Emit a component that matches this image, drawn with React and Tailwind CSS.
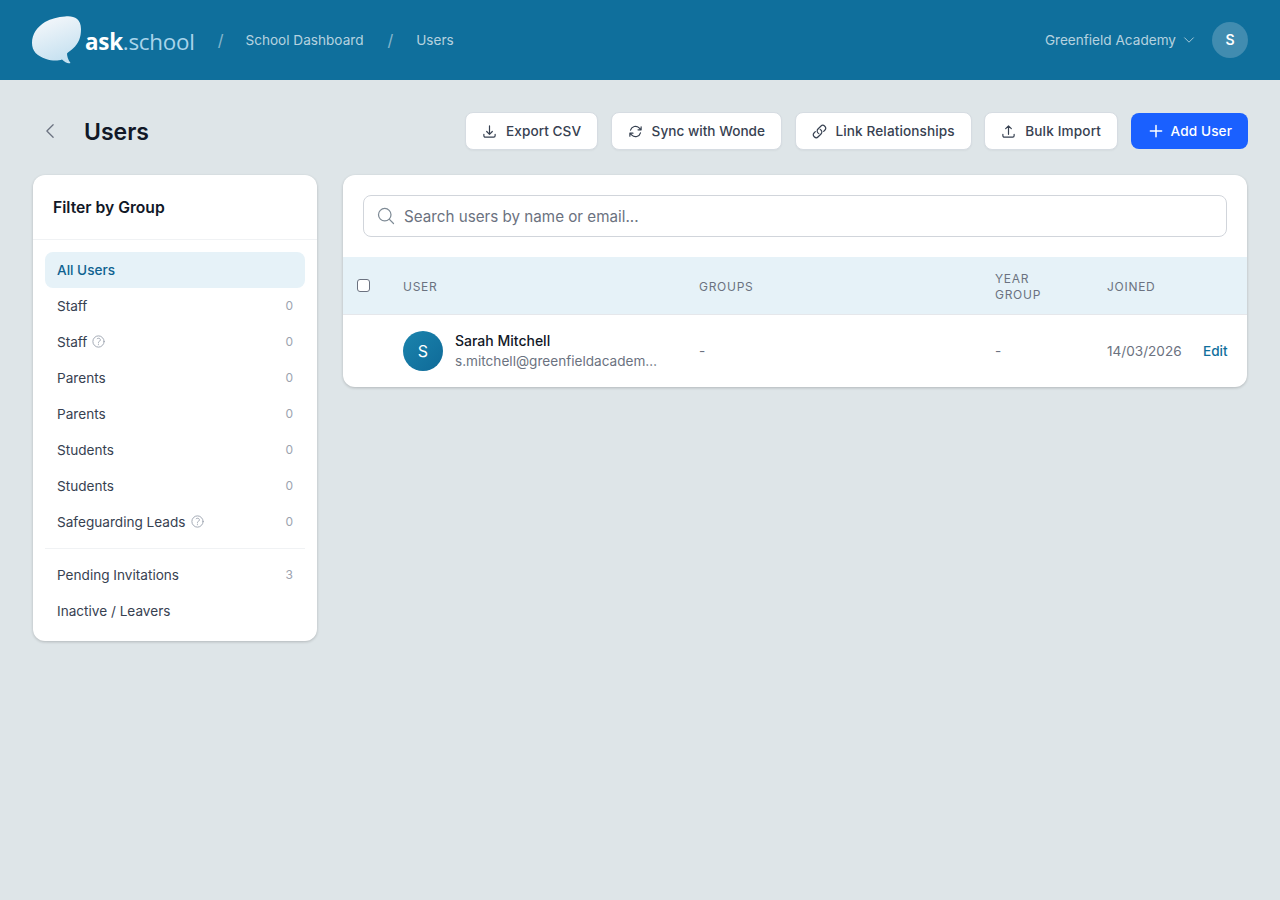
import React from "react";
import {
  HiOutlineChevronLeft,
  HiOutlineChevronDown,
  HiOutlineArrowDownTray,
  HiOutlineArrowUpTray,
  HiOutlineArrowPath,
  HiOutlineLink,
  HiOutlinePlus,
  HiOutlineMagnifyingGlass,
  HiOutlineQuestionMarkCircle,
} from "react-icons/hi2";

function Logo() {
  return (
    <div className="flex items-center">
      <svg width="50" height="50" viewBox="0 0 50 50" className="shrink-0">
        <defs>
          <linearGradient id="lg" x1="0.2" y1="0" x2="0.6" y2="1">
            <stop offset="0" stopColor="#f6f8fb" />
            <stop offset="1" stopColor="#c4e0f0" />
          </linearGradient>
        </defs>
        <path
          d="M33 1.5C41 0.5 49 3 49 14C49 22 47 28 41 33.5C38 36 36 37 35 38.5C35 41 36 45 38.5 48C36 49 33 47.5 30 44.5C26 46 20 46 14 44C5 41 0 36 0 28C0 19 5 12 13 7C19 3.5 26 2 33 1.5Z"
          fill="url(#lg)"
        />
      </svg>
      <span className="ml-[3px] mt-[5px] text-[22.4px] leading-none tracking-[-0.25px] font-['Open_Sans',sans-serif]">
        <span className="font-bold text-white">ask</span>
        <span className="text-[#a9d4ea]">.school</span>
      </span>
    </div>
  );
}

function ActionButton({ icon: Icon, label, tracking }) {
  return (
    <button
      className={
        "h-[38px] flex items-center gap-[9px] px-4 bg-white border border-[#d6dce2] rounded-lg text-[13.6px] font-medium text-[#374151] shadow-[0_1px_2px_rgba(0,0,0,0.04)] " +
        tracking
      }
    >
      <Icon size={15} strokeWidth={1.9} className="text-[#374151]" />
      {label}
    </button>
  );
}

function Item({ label, count, help, active }) {
  return (
    <div
      className={
        "h-9 flex items-center justify-between px-3 rounded-lg text-[13.6px] " +
        (active ? "bg-[#e6f2f8] text-[#0f6290] font-medium" : "text-[#374151]")
      }
    >
      <span className="flex items-center gap-[4px]">
        {label}
        {help && <HiOutlineQuestionMarkCircle size={15} className="text-[#9ca3af]" />}
      </span>
      {count !== undefined && <span className="text-xs text-[#9ca3af]">{count}</span>}
    </div>
  );
}

export default function App() {
  return (
    <div className="min-h-[900px] bg-[#dee5e8] font-['Inter',sans-serif]">
      <header className="h-20 bg-[#0f6f9c] flex items-center justify-between px-8">
        <div className="flex items-center">
          <Logo />
          <span className="ml-[23px] text-white/50 text-base">/</span>
          <span className="ml-[22px] text-[13.6px] text-white/70">School Dashboard</span>
          <span className="ml-[24px] text-white/50 text-base">/</span>
          <span className="ml-[23px] text-[13.6px] text-white/70">Users</span>
        </div>
        <div className="flex items-center">
          <span className="text-[13.6px] text-white/70">Greenfield Academy</span>
          <HiOutlineChevronDown size={14} className="ml-[6px] text-white/70" />
          <div className="ml-[16px] w-9 h-9 rounded-full bg-[#418cb0] flex items-center justify-center text-sm font-semibold text-white">
            S
          </div>
        </div>
      </header>

      <main className="px-[33px] pt-8">
        <div className="flex items-center justify-between h-[38px] -mr-px">
          <div className="flex items-center">
            <HiOutlineChevronLeft size={20} className="ml-[7px] text-[#6b7280]" />
            <h1 className="ml-[24px] mt-[2px] text-[23px] font-semibold text-[#111827] leading-8">Users</h1>
          </div>
          <div className="flex items-center gap-[12.5px]">
            <ActionButton icon={HiOutlineArrowDownTray} label="Export CSV" tracking="tracking-[0.05px]" />
            <ActionButton icon={HiOutlineArrowPath} label="Sync with Wonde" tracking="tracking-[0.02px]" />
            <ActionButton icon={HiOutlineLink} label="Link Relationships" tracking="tracking-[0.1px]" />
            <ActionButton icon={HiOutlineArrowUpTray} label="Bulk Import" tracking="tracking-[0.15px]" />
            <button className="h-9 flex items-center gap-[6px] px-4 bg-[#1a60ff] rounded-lg text-[13.6px] tracking-[0.1px] font-medium text-white">
              <HiOutlinePlus size={18} strokeWidth={2} />
              Add User
            </button>
          </div>
        </div>

        <div className="flex items-start gap-[26px] mt-[25px]">
          <aside className="w-[284px] shrink-0 bg-white rounded-xl shadow-[0_1px_3px_rgba(0,0,0,0.2)]">
            <div className="h-[65px] flex items-center pt-[2px] px-5 border-b border-[#f0f2f4]">
              <h2 className="text-[15.7px] font-semibold text-[#111827]">Filter by Group</h2>
            </div>
            <div className="p-3">
              <Item label="All Users" active />
              <Item label="Staff" count={0} />
              <Item label="Staff" count={0} help />
              <Item label="Parents" count={0} />
              <Item label="Parents" count={0} />
              <Item label="Students" count={0} />
              <Item label="Students" count={0} />
              <Item label="Safeguarding Leads" count={0} help />
              <div className="border-t border-[#f0f2f4] mt-2 mb-2" />
              <Item label="Pending Invitations" count={3} />
              <Item label="Inactive / Leavers" />
            </div>
          </aside>

          <section className="flex-1 bg-white rounded-xl shadow-[0_1px_3px_rgba(0,0,0,0.2)] overflow-hidden">
            <div className="p-5">
              <div className="h-[42px] flex items-center border border-[#d1d5db] rounded-lg pl-3">
                <HiOutlineMagnifyingGlass size={20} className="text-[#7f8b96]" />
                <span className="ml-2 mt-[2px] text-[15.2px] text-[#6b7280]">Search users by name or email...</span>
              </div>
            </div>
            <div className="h-[58px] flex items-center pt-[2px] bg-[#e6f2f8] border-b border-[#e5e7eb] text-xs tracking-[0.72px] text-[#6b7280]">
              <div className="w-[60px] pl-[14px] flex items-center">
                <div className="w-[13px] h-[13px] -mt-[2px] rounded-[3px] border border-[#6b7280] bg-white" />
              </div>
              <div className="w-[296px]">USER</div>
              <div className="w-[296px]">GROUPS</div>
              <div className="w-[112px] leading-4">
                YEAR
                <br />
                GROUP
              </div>
              <div>JOINED</div>
            </div>
            <div className="h-[72px] flex items-center text-[13.6px]">
              <div className="w-[60px]" />
              <div className="w-[296px] flex items-center gap-3">
                <div className="w-10 h-10 rounded-full bg-gradient-to-br from-[#1b84ad] to-[#0f6a98] flex items-center justify-center text-base text-white">
                  S
                </div>
                <div>
                  <div className="text-[14px] font-medium text-[#111827] leading-5">Sarah Mitchell</div>
                  <div className="text-[13.6px] text-[#6b7280] leading-5 w-[202px] truncate">
                    s.mitchell@greenfieldacademy.org.uk
                  </div>
                </div>
              </div>
              <div className="w-[296px] text-[#6b7280]">-</div>
              <div className="w-[112px] text-[#6b7280]">-</div>
              <div className="w-[96px] text-[#6b7280]">14/03/2026</div>
              <div className="font-medium text-[#0f6f9c]">Edit</div>
            </div>
          </section>
        </div>
      </main>
    </div>
  );
}
